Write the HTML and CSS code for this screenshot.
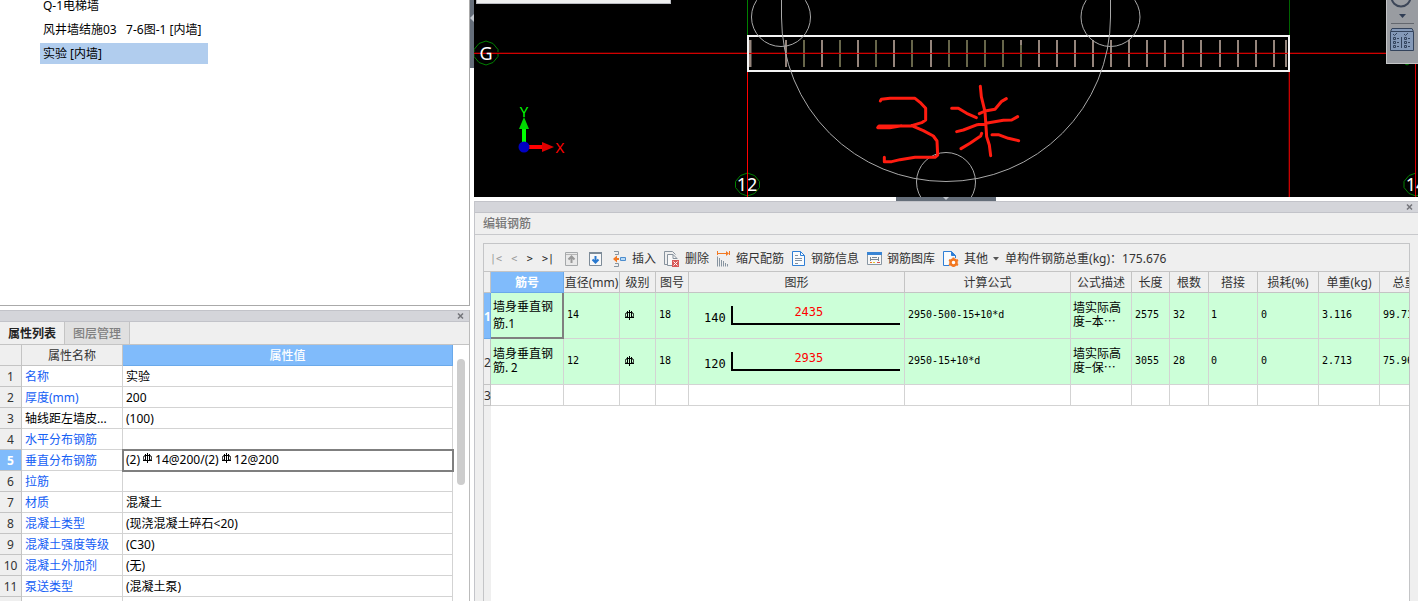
FILE: index.html
```html
<!DOCTYPE html>
<html lang="zh-CN">
<head>
<meta charset="utf-8">
<title>编辑钢筋</title>
<link rel="stylesheet" href="styles.css">
</head>
<body>
<svg width="0" height="0" class="defs" aria-hidden="true">
  <symbol id="rebar" viewBox="0 0 9 10">
    <path d="M4.500 0v10M2.500 1v7M6.500 1v7M0 7.500h9" fill="none" stroke="#000"/>
    <rect x=".5" y="2.500" width="8" height="5" rx="2" fill="none" stroke="#000"/>
  </symbol>
  <symbol id="close" viewBox="0 0 7 6">
    <path d="M1 .5l5 5M6 .5l-5 5" fill="none" stroke="#74757a" stroke-width="1.500"/>
  </symbol>
</svg>
<div class="app">
  <aside class="left">
    <section class="components">
      <ul class="component-list">
        <li>Q-1电梯墙</li>
        <li>风井墙结施03&nbsp;&nbsp; 7-6图-1 [内墙]</li>
        <li class="selected">实验 [内墙]</li>
      </ul>
    </section>
    <section class="properties">
      <div class="dock-bar"><button class="close" aria-label="关闭属性列表"><svg width="7" height="6"><use href="#close"/></svg></button></div>
      <div class="tabs" role="tablist">
        <button class="tab active" role="tab" aria-selected="true">属性列表</button>
        <button class="tab" role="tab" aria-selected="false">图层管理</button>
      </div>
      <div class="prop-body">
        <table class="prop-table">
          <colgroup><col class="p-num"><col class="p-name"><col></colgroup>
          <thead><tr><th></th><th>属性名称</th><th class="current">属性值</th></tr></thead>
          <tbody>
            <tr><th>1</th><td>名称</td><td>实验</td></tr>
            <tr><th>2</th><td>厚度(mm)</td><td>200</td></tr>
            <tr><th>3</th><td class="plain">轴线距左墙皮...</td><td>(100)</td></tr>
            <tr><th>4</th><td>水平分布钢筋</td><td></td></tr>
            <tr class="active"><th>5</th><td>垂直分布钢筋</td><td>(2)<svg class="mark"><use href="#rebar"/></svg>14@200/(2)<svg class="mark"><use href="#rebar"/></svg>12@200</td></tr>
            <tr><th>6</th><td>拉筋</td><td></td></tr>
            <tr><th>7</th><td>材质</td><td>混凝土</td></tr>
            <tr><th>8</th><td>混凝土类型</td><td>(现浇混凝土碎石&lt;20)</td></tr>
            <tr><th>9</th><td>混凝土强度等级</td><td>(C30)</td></tr>
            <tr><th>10</th><td>混凝土外加剂</td><td>(无)</td></tr>
            <tr><th>11</th><td>泵送类型</td><td>(混凝土泵)</td></tr>
            <tr><th></th><td></td><td></td></tr>
          </tbody>
        </table>
        <div class="scroll"><div class="thumb"></div></div>
      </div>
    </section>
  </aside>
  <div class="v-split"><div class="v-grip"><svg width="4" height="8"><path d="M4 0v8L0 4z" fill="#c3c8cf"/></svg></div></div>
  <main class="right">
    <section class="canvas">
      <svg class="drawing">
        <g transform="translate(-474 0)">
          <g fill="none" stroke="#008000" stroke-width="1">
            <path d="M486 41l7 2.500 5 6v7l-5 6-7 2.500-7-2.500-5-6v-7l5-6z"/>
            <path d="M747.500 173l7 2.500 5 6v6l-5 6-7 2.500-7-2.500-5-6v-6l5-6z"/>
            <path d="M1416 173l-7 2.500-5 6v6l5 6 7 2.500 7-2.500M1402 62l5 3 5-3"/>
          </g>
          <rect x="747" y="0" width="1" height="35" fill="#008000"/>
          <rect x="1289" y="0" width="1" height="35" fill="#006400"/>
          <rect x="474" y="52" width="944" height="1" fill="#400000"/>
          <rect x="747" y="72" width="1" height="125" fill="#ff0000"/>
          <rect x="1288" y="72" width="1" height="125" fill="#400000"/>
          <rect x="1289" y="72" width="1" height="125" fill="#c80000"/>
          <rect x="1415" y="62" width="1" height="135" fill="#d80000"/>
          <path d="M750 40v27" stroke="#95857c" stroke-width="3"/>
          <path d="M786 40v27M822 40v27M858 40v27M894 40v27M931 40v27M1039 40v27M1057 40v27M1075 40v27M1093 40v27M1111 40v27M1129 40v27M1147 40v27M1165 40v27M1183 40v27M1201 40v27M1220 40v27M1238 40v27M1256 40v27M1274 40v27M1286 40v27M1021 40v5" stroke="#95857c" stroke-width="2"/>
          <path d="M804 40v27M840 40v27M876 40v27M912 40v27M949 40v27M967 40v27M985 40v27M1003 40v27M1021 45v22" stroke="#67664a" stroke-width="2"/>
          <rect x="474" y="53" width="944" height="1" fill="#d00000"/>
          <rect x="748" y="36" width="541" height="35" fill="none" stroke="#f4f4f4" stroke-width="2"/>
          <g fill="none" stroke="#a8a8a8" stroke-width="1">
            <circle cx="781" cy="17" r="29.500"/><circle cx="1110.500" cy="17" r="29.500"/><circle cx="946" cy="182" r="29.500"/>
            <path d="M781.500 0v17A164.500 164.500 0 0 0 1110.500 17V0"/>
          </g>
          <g class="axis-text" fill="#fff" text-anchor="middle"><text x="486" y="60">G</text><text x="747" y="191">12</text><text x="1416" y="191">14</text></g>
          <rect x="747" y="172" width="1" height="25" fill="#ff0000"/>
          <path d="M524 145v-17" stroke="#0f0" stroke-width="4"/><path d="M524 117l5 12h-10z" fill="#00d800"/>
          <path d="M527 147h17" stroke="#f00" stroke-width="4"/><path d="M554 147l-12-5v10z" fill="#e00000"/>
          <circle cx="524" cy="147" r="5.500" fill="#0000c4"/>
          <g class="ucs-text" text-anchor="middle"><text x="524" y="117" fill="#0f0">Y</text><text x="560" y="153" fill="#f00">X</text></g>
          <g transform="translate(740 0) scale(.33333)" fill="none" stroke="#ff1c10" stroke-width="9" stroke-linecap="round" stroke-linejoin="round">
            <path d="M421 303l3-5 26-3h75l15 12 17 18v35l-12 8-30 9-98 1-4 5h36l35-6M515 377l35 15 30 16 11 15 2 42-8 7-60 0-45 7-25 6h-22v-13"/>
            <path d="M721 259l3 31 11 45 5 75 8 25 4 32M635 325h20l25 15 29 13M718 341l17-8 30-5 20-24 14-8M650 395l20-5 42-16 78-13 25-1 18-10M663 446l27-16 32-22 3-8M756 404h19l30 11 31 7"/>
          </g>
        </g>
      </svg>
      <div class="float-bar"></div>
      <div class="view-tools">
        <svg width="31" height="63">
          <circle cx="14" cy="-3" r="9.500" fill="none" stroke="#3c4658" stroke-width="2"/>
          <path d="M12 14h7l-3.500 4z" fill="#2f3d54"/>
          <path d="M4 23.500h23" stroke="#63676e"/>
          <path d="M5 28.500h20l1.500 3v19h-23v-19z" fill="#8499b8" stroke="#33435c"/>
          <path d="M4 31.500h22M14.500 37v11" stroke="#33435c"/>
          <path d="M6 34l1.500 1.500 2.500-2.500M17 34l1.500 1.500 2.500-2.500" fill="none" stroke="#33435c"/>
          <path d="M6.500 37.500h2v2h-2zM6.500 41.500h2v2h-2zM6.500 45.500h2v2h-2zM17.500 37.500h2v2h-2zM17.500 41.500h2v2h-2zM17.500 45.500h2v2h-2zM10 38.500h2M10 42.500h2M10 46.500h2M21 38.500h2M21 42.500h2M21 46.500h2" fill="none" stroke="#33435c"/>
        </svg>
      </div>
    </section>
    <div class="h-split"><div class="h-grip"><svg width="6" height="3"><path d="M0 0h6L3 3z" fill="#c3c8cf"/></svg></div></div>
    <section class="editor">
      <div class="dock-bar"><button class="close" aria-label="关闭编辑钢筋"><svg width="7" height="6"><use href="#close"/></svg></button></div>
      <h1 class="title">编辑钢筋</h1>
      <div class="frame">
        <div class="toolbar">
          <div class="nav">
            <button class="dim">|&lt;</button><button class="dim">&lt;</button><button>&gt;</button><button>&gt;|</button>
          </div>
          <div class="moves">
            <button aria-label="上移"><svg width="13" height="14"><path d="M.5.500h12v13H.5z" fill="#e9e9e9" stroke="#a5a8aa"/><path d="M1 2.500h11" stroke="#b5b5b5"/><path d="M6.500 11V5M3.500 7.500l3-3 3 3" fill="none" stroke="#999" stroke-width="2"/></svg></button>
            <button aria-label="下移"><svg width="13" height="14"><path d="M.5.500h12v13H.5z" fill="#f8f8f8" stroke="#7d8b98"/><path d="M0 1h13" stroke="#7d8b98" stroke-width="2"/><path d="M6.500 4v6M3.500 7.500l3 3 3-3" fill="none" stroke="#2878cf" stroke-width="2"/></svg></button>
          </div>
          <button class="tool"><svg width="14" height="16"><path d="M1 .5h4.500v3H2M1 15.500h4.500v-3H2" fill="none" stroke="#8794a0"/><path d="M7.500 6.500h5v3h-5z" fill="#b8daf7" stroke="#4d8dcd"/><path d="M6 8H2" stroke="#f27822" stroke-width="2"/><path d="M4 4.500v7L0 8z" fill="#f27822"/></svg><span>插入</span></button>
          <button class="tool"><svg width="16" height="16"><path d="M3.500 13.500h-3V.500h8l3 3" fill="none" stroke="#87929d"/><path d="M8 14.500H3.500v-11H9l4 4V8" fill="#f8f8f8" stroke="#87929d"/><path d="M9 3.500v4h4" fill="none" stroke="#87929d"/><path d="M8 9h7v7H8z" fill="#d85858"/><path d="M9.500 10.500l4 4m0-4l-4 4" stroke="#fff"/></svg><span>删除</span></button>
          <button class="tool"><svg width="14" height="16"><path d="M1 2.500h9M.5 0v4M12.500 0v4" stroke="#f27822"/><path d="M9 0l3 2.500L9 5z" fill="#f27822"/><path d="M.5 5.500v10M2.500 7v8.500M4.500 9v6.500M6.500 10v5.500M8.500 12v3.500M10.500 13v2.500" stroke="#8794a0"/></svg><span>缩尺配筋</span></button>
          <button class="tool"><svg width="14" height="16"><path d="M.5.500h8l4 4v10H.5z" fill="#f9fbfd" stroke="#2f7fd6"/><path d="M8.500.5v4h4" fill="none" stroke="#2f7fd6"/><path d="M3 4.500h3M3 7.500h7M3 9.500h7M3 12.500h3" stroke="#8290a0"/></svg><span>钢筋信息</span></button>
          <button class="tool"><svg width="15" height="14"><path d="M.5.500h14v12H.5z" fill="#f7f7f7" stroke="#8997a3"/><path d="M0 1.500h15" stroke="#3884d4" stroke-width="3"/><path d="M3.500 5v4M3.500 7.500h8M11.500 5v4M5 5.500h5" fill="none" stroke="#778694"/><path d="M3 10.500h2" stroke="#f27822"/><path d="M6 10.500h2" stroke="#e1c62b"/><path d="M10 10.500h3" stroke="#dd5050"/></svg><span>钢筋图库</span></button>
          <button class="tool"><svg width="16" height="16"><path d="M6 14.500H.5V.500h8l4 4V7" fill="#f9fbfd" stroke="#2f7fd6"/><path d="M8.500.5v4h4" fill="#2f7fd6" stroke="#2f7fd6"/><circle cx="10.500" cy="11.500" r="3" fill="#fff" stroke="#f27822" stroke-width="2.500"/><path d="M10.500 6.500v2M10.500 14.500v1.500M6 9l2 1M13 13l2 1M6 14l2-1M13 10l2-1" stroke="#f27822" stroke-width="2"/></svg><span>其他</span><svg width="6" height="4"><path d="M0 0h6L3 3.500z" fill="#555"/></svg></button>
          <span class="total">单构件钢筋总重(kg)：175.676</span>
        </div>
        <div class="grid-area">
          <table class="bars">
            <colgroup><col class="w-head"><col class="w-no"><col class="w-dia"><col class="w-grade"><col class="w-fig"><col class="w-shape"><col class="w-formula"><col class="w-desc"><col class="w-len"><col class="w-count"><col class="w-lap"><col class="w-unit"><col class="w-unit"><col class="w-total"></colgroup>
            <thead><tr><th></th><th class="current">筋号</th><th>直径(mm)</th><th>级别</th><th>图号</th><th>图形</th><th>计算公式</th><th>公式描述</th><th>长度</th><th>根数</th><th>搭接</th><th>损耗(%)</th><th>单重(kg)</th><th>总重(kg)</th></tr></thead>
            <tbody>
              <tr class="filled"><th class="current">1</th><td class="name focus">墙身垂直钢筋.1</td><td>14</td><td><svg class="mark low"><use href="#rebar"/></svg></td><td>18</td>
                <td class="shape"><div class="bend"><span class="hook">140</span><span class="leg">2435</span></div></td>
                <td>2950-500-15+10*d</td><td class="cjk">墙实际高度−本⋯</td><td>2575</td><td>32</td><td>1</td><td>0</td><td>3.116</td><td>99.712</td></tr>
              <tr class="filled"><th>2</th><td class="cjk">墙身垂直钢筋. 2</td><td>12</td><td><svg class="mark low"><use href="#rebar"/></svg></td><td>18</td>
                <td class="shape"><div class="bend"><span class="hook">120</span><span class="leg">2935</span></div></td>
                <td>2950-15+10*d</td><td class="cjk">墙实际高度−保⋯</td><td>3055</td><td>28</td><td>0</td><td>0</td><td>2.713</td><td>75.964</td></tr>
              <tr class="empty"><th>3</th><td></td><td></td><td></td><td></td><td></td><td></td><td></td><td></td><td></td><td></td><td></td><td></td><td></td></tr>
            </tbody>
          </table>
        </div>
      </div>
    </section>
  </main>
</div>
</body>
</html>
```
FILE: styles.css
```css
* { box-sizing: border-box; }
body {
  margin: 0;
  font: 12px/16px "Noto Sans", "Noto Sans CJK SC", sans-serif;
  color: #333;
  background: #fff;
}
button { border: 0; padding: 0; background: none; font: inherit; color: inherit; }
svg { display: block; flex: none; }
.defs { position: absolute; }
table { border-collapse: separate; border-spacing: 0; table-layout: fixed; }
th { font-weight: 400; }

.app {
  display: grid;
  grid-template-columns: 470px 4px minmax(0, 1fr);
  height: 100vh;
  overflow: hidden;
}

/* left column */
.left {
  display: grid;
  grid-template-columns: minmax(0, 1fr);
  grid-template-rows: minmax(0, 306fr) minmax(0, 291fr);
  row-gap: 4px;
  min-height: 0;
}
.components { border-right: 1px solid #aaa; border-bottom: 1px solid #aaa; overflow: hidden; }
.component-list {
  display: flex;
  flex-direction: column;
  gap: 3px;
  width: 168px;
  margin: -5px 0 0 40px;
  padding: 0;
  list-style: none;
  color: #000;
}
.component-list li { padding: 0 3px; line-height: 21px; white-space: nowrap; }
.component-list .selected { background: #b1cdee; }

.properties { display: flex; flex-direction: column; min-height: 0; border-right: 1px solid #bbb; overflow: hidden; }
.dock-bar {
  display: flex;
  flex: none;
  align-items: center;
  justify-content: flex-end;
  height: 12px;
  padding-right: 5px;
  background: #d4d5da;
  border-top: 1px solid #c2c3c9;
  border-bottom: 1px solid #c2c3c9;
}
.tabs { display: flex; flex: none; height: 23px; background: #efefef; border-bottom: 1px solid #c4c4c4; }
.tab { width: 65px; padding-top: 1px; border-right: 1px solid #c4c4c4; background: #e0e0e0; color: #808080; font-weight: 500; }
.tab.active { background: #efefef; color: #222; font-weight: 700; }
.prop-body { display: flex; flex: 1; min-height: 0; overflow: hidden; }
.prop-table { flex: 1; align-self: flex-start; width: 0; }
.p-num { width: 22px; }
.p-name { width: 101px; }
.prop-table th, .prop-table td {
  height: 21px;
  padding: 2px 3px 0;
  border-right: 1px solid #d3d3d3;
  border-bottom: 1px solid #d3d3d3;
  line-height: 18px;
  text-align: left;
  white-space: nowrap;
  overflow: hidden;
}
.prop-table th { padding: 2px 0 0; background: #efefef; border-color: #c4c4c4; text-align: center; }
.prop-table th.current { background: #80bbfb; border-color: #6aa9ea; color: #fff; font-weight: 500; }
.prop-table td { color: #000; }
.prop-table td:nth-child(2) { color: #1560f5; }
.prop-table td.plain { color: #000; }
.prop-table .active th { background: #80bbfb; color: #fff; font-weight: 700; }
.prop-table .active td:last-child { padding-top: 0; outline: 2px solid #7f7f7f; outline-offset: -1px; }
.mark { display: inline-block; width: 9px; height: 10px; margin: 0 3px; vertical-align: 1px; }
.scroll { display: flex; flex: none; justify-content: center; width: 16px; padding: 14px 0 0; }
.thumb { width: 8px; height: 126px; border-radius: 4px; background: #cdcdcd; }

/* splitters */
.v-grip { display: flex; align-items: center; justify-content: flex-end; height: 68px; padding-bottom: 32px; background: #656e7a; }
.h-split { display: flex; justify-content: center; }
.h-grip { display: flex; justify-content: center; width: 100px; background: #656e7a; }

/* right column */
.right {
  display: grid;
  grid-template-columns: minmax(0, 1fr);
  grid-template-rows: minmax(0, 197fr) 4px minmax(0, 400fr);
  min-width: 0;
  min-height: 0;
}
.canvas { position: relative; background: #000; overflow: hidden; }
.drawing { width: 100%; height: 100%; }
.axis-text { font-size: 18px; }
.ucs-text { font-size: 15px; }
.float-bar { position: absolute; top: 0; left: 2px; width: 195px; height: 4px; background: #efefef; border: 1px solid #b9bac0; border-top: 0; }
.view-tools { position: absolute; top: 0; right: 0; background: #999ca1; border-left: 1px solid #c5c6c8; border-bottom: 1px solid #c5c6c8; }

.editor { display: flex; flex-direction: column; min-height: 0; background: #efefef; border-left: 1px solid #c4c5ca; }
.title { flex: none; margin: 0; padding: 0 8px; border-bottom: 1px solid #c8c9cc; font-size: 12px; font-weight: 500; line-height: 21px; color: #777; }
.frame {
  display: flex;
  flex: 1;
  flex-direction: column;
  min-height: 0;
  margin: 8px 8px 0;
  border: 1px solid #c4c5c7;
  border-bottom: 0;
}
.toolbar { display: flex; flex: none; align-items: center; gap: 8px; height: 28px; padding: 3px 0 0 6px; border-bottom: 1px solid #c4c4c4; white-space: nowrap; }
.nav { display: flex; justify-content: space-between; width: 64px; font: 10px/16px "DejaVu Sans Mono", monospace; color: #222; }
.nav .dim { color: #999; }
.moves { display: flex; gap: 11px; margin: 0 3px; }
.tool { display: flex; align-items: center; gap: 5px; }
.total { margin-left: -2px; }
.grid-area { flex: 1; min-height: 0; overflow: hidden; background: linear-gradient(90deg, #efefef 7px, #fff 7px); }

.bars { width: 967px; }
.w-head { width: 7px; }
.w-no { width: 73px; }
.w-dia { width: 56px; }
.w-grade { width: 36px; }
.w-fig { width: 33px; }
.w-shape { width: 216px; }
.w-formula { width: 166px; }
.w-desc { width: 61px; }
.w-len { width: 38px; }
.w-count { width: 39px; }
.w-lap { width: 49px; }
.w-unit { width: 61px; }
.w-total { width: 71px; }
.bars th {
  height: 21px;
  padding: 2px 0 0;
  background: #efefef;
  border-right: 1px solid #c4c4c4;
  border-bottom: 1px solid #c4c4c4;
  line-height: 18px;
  white-space: nowrap;
}
.bars th.current { background: #80bbfb; border-color: #6aa9ea; color: #fff; font-weight: 700; }
.bars td {
  padding: 0 3px;
  border-right: 1px solid #d3d3d3;
  border-bottom: 1px solid #d3d3d3;
  font: 10px/14px "DejaVu Sans Mono", monospace;
  color: #000;
  overflow: hidden;
}
.bars td:nth-child(11) { padding-left: 2px; }
.filled td { height: 46px; padding-bottom: 2px; background: #ccffd8; }
.bars .name { padding: 0 2px; font: 12px/17px "Noto Sans", "Noto Sans CJK SC", sans-serif; }
.bars .focus { border-right: 2px solid #7f7f7f; border-bottom: 2px solid #7f7f7f; }
.bars .cjk { padding: 0 3px 4px 2px; font: 12px/14px "Noto Sans CJK SC", sans-serif; }
.bars .low { margin: 0 2px; vertical-align: -2px; }
.bars .shape { padding: 0 4px 0 15px; font-size: 12px; }
.bend { display: flex; align-items: flex-start; gap: 5px; }
.hook { padding-top: 5px; }
.leg { flex: 1; height: 19px; padding-right: 15px; border-left: 2px solid #000; border-bottom: 2px solid #000; color: #f00; line-height: 12px; text-align: center; }
```
